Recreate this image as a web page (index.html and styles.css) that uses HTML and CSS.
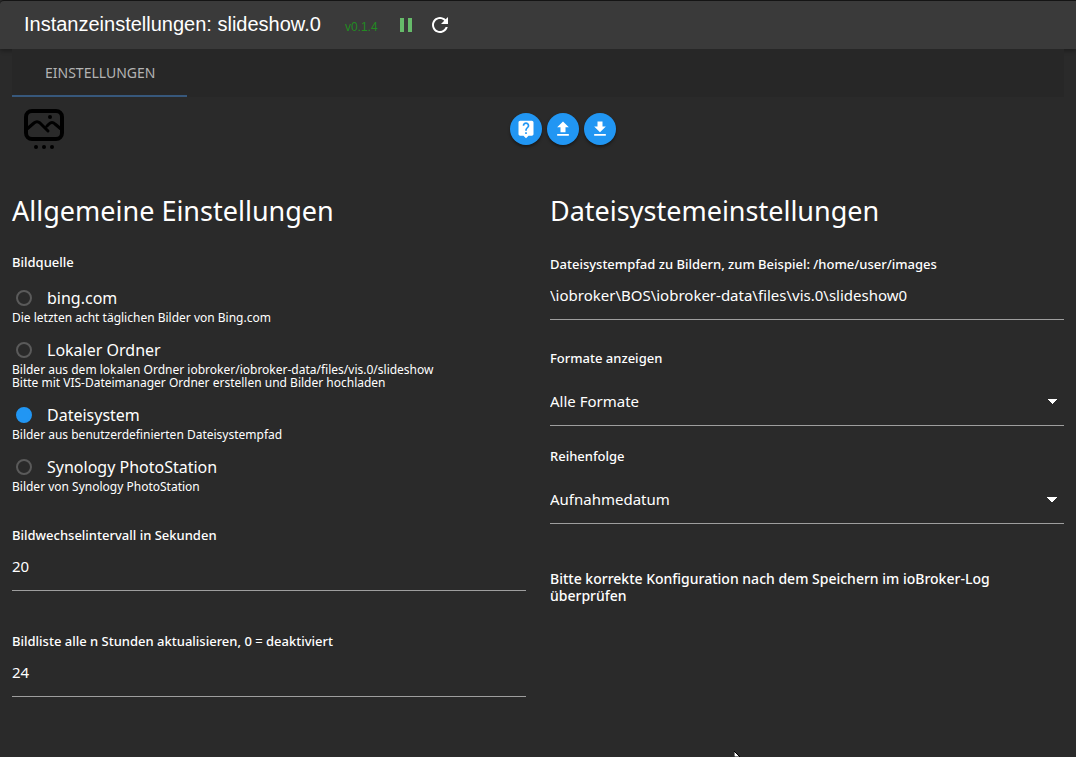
FILE: index.html
```html
<!DOCTYPE html>
<html lang="de">
<head>
<meta charset="utf-8">
<meta name="viewport" content="width=device-width, initial-scale=1">
<title>Instanzeinstellungen: slideshow.0</title>
<link rel="stylesheet" href="styles.css">
</head>
<body class="page">
<header class="titlebar">
  <h1 class="title">Instanzeinstellungen: slideshow.0</h1>
  <span class="version">v0.1.4</span>
  <div class="title-actions">
    <button class="icon-button pause" type="button" aria-label="Pause"><svg viewBox="0 0 24 24"><path d="M6 19h4V5H6v14zm8-14v14h4V5h-4z"/></svg></button>
    <button class="icon-button" type="button" aria-label="Neu starten"><svg viewBox="0 0 24 24"><path d="M17.65 6.35C16.2 4.9 14.21 4 12 4c-4.42 0-7.99 3.58-7.99 8s3.57 8 7.99 8c3.73 0 6.84-2.55 7.73-6h-2.08c-.82 2.33-3.04 4-5.65 4-3.31 0-6-2.69-6-6s2.69-6 6-6c1.66 0 3.14.69 4.22 1.78L13 11h7V4l-2.35 2.35z"/></svg></button>
  </div>
</header>
<nav class="tabs"><a class="tab" href="#settings">EINSTELLUNGEN</a></nav>
<div class="toolbar">
  <svg class="logo" viewBox="0 0 40 42" aria-hidden="true">
    <rect x="2" y="3" width="36" height="28" rx="6"/>
    <path class="logo-hills" d="M3 21l7-6q3-2.500 6 0l8 8M23 18l2-2q3-3 6 0l6 5"/>
    <g class="logo-dots"><circle cx="26" cy="9" r="2"/><circle cx="12" cy="39" r="2"/><circle cx="20" cy="39" r="2"/><circle cx="28" cy="39" r="2"/></g>
  </svg>
  <div class="actions">
    <button class="round-button" type="button" aria-label="Hilfe"><svg viewBox="0 0 24 24"><path d="M19 2H5c-1.110 0-2 .9-2 2v14c0 1.100.89 2 2 2h4l3 3 3-3h4c1.100 0 2-.9 2-2V4c0-1.100-.9-2-2-2zm-6 16h-2v-2h2v2zm2.070-7.750l-.9.920C13.450 11.900 13 12.500 13 14h-2v-.5c0-1.100.45-2.100 1.170-2.830l1.240-1.260c.37-.36.59-.86.59-1.410 0-1.100-.9-2-2-2s-2 .9-2 2H8c0-2.210 1.790-4 4-4s4 1.790 4 4c0 .88-.36 1.680-.93 2.250z"/></svg></button>
    <button class="round-button" type="button" aria-label="Hochladen"><svg viewBox="0 0 24 24"><path d="M9 16h6v-6h4l-7-7-7 7h4zm-4 2h14v2H5z"/></svg></button>
    <button class="round-button" type="button" aria-label="Herunterladen"><svg viewBox="0 0 24 24"><path d="M19 9h-4V3H9v6H5l7 7 7-7zM5 18v2h14v-2H5z"/></svg></button>
  </div>
</div>
<main class="columns" id="settings">
  <section class="column">
    <h2 class="heading">Allgemeine Einstellungen</h2>
    <fieldset class="sources">
      <legend class="label">Bildquelle</legend>
      <div class="source">
        <label class="choice"><input class="radio" type="radio" name="source">bing.com</label>
        <p class="hint">Die letzten acht täglichen Bilder von Bing.com</p>
      </div>
      <div class="source">
        <label class="choice"><input class="radio" type="radio" name="source">Lokaler Ordner</label>
        <p class="hint">Bilder aus dem lokalen Ordner iobroker/iobroker-data/files/vis.0/slideshow<br>Bitte mit VIS-Dateimanager Ordner erstellen und Bilder hochladen</p>
      </div>
      <div class="source">
        <label class="choice"><input class="radio" type="radio" name="source" checked>Dateisystem</label>
        <p class="hint">Bilder aus benutzerdefinierten Dateisystempfad</p>
      </div>
      <div class="source">
        <label class="choice"><input class="radio" type="radio" name="source">Synology PhotoStation</label>
        <p class="hint">Bilder von Synology PhotoStation</p>
      </div>
    </fieldset>
    <div class="numbers">
      <div class="field">
        <label class="label" for="interval">Bildwechselintervall in Sekunden</label>
        <input class="control" id="interval" type="text" value="20">
      </div>
      <div class="field">
        <label class="label" for="update">Bildliste alle n Stunden aktualisieren, 0 = deaktiviert</label>
        <input class="control" id="update" type="text" value="24">
      </div>
    </div>
  </section>
  <section class="column">
    <h2 class="heading">Dateisystemeinstellungen</h2>
    <div class="filesystem">
      <div class="field">
        <label class="label" for="path">Dateisystempfad zu Bildern, zum Beispiel: /home/user/images</label>
        <input class="control" id="path" type="text" value="\iobroker\BOS\iobroker-data\files\vis.0\slideshow0">
      </div>
      <div class="selects">
        <div class="field select-field">
          <label class="label" for="format">Formate anzeigen</label>
          <select class="control select" id="format"><option>Alle Formate</option></select>
        </div>
        <div class="field select-field">
          <label class="label" for="order">Reihenfolge</label>
          <select class="control select" id="order"><option>Aufnahmedatum</option></select>
        </div>
      </div>
      <p class="notice">Bitte korrekte Konfiguration nach dem Speichern im ioBroker-Log überprüfen</p>
    </div>
  </section>
</main>
<svg class="pointer" viewBox="0 0 6 6" aria-hidden="true"><path d="M0 0v6h6z"/></svg>
</body>
</html>
```
FILE: styles.css
```css
* {
  box-sizing: border-box;
}

.page {
  margin: 0;
  min-height: 100vh;
  position: relative;
  background: #2a2a2a;
  color: #fff;
  font: 13px/20px "Noto Sans", "Open Sans", sans-serif;
}

.titlebar {
  display: flex;
  align-items: center;
  padding: 0 24px;
  height: 49px;
  border-top: 1px solid #141414;
  border-top-left-radius: 4px;
  background: #3a3a3a;
  font-family: "Liberation Sans", Arial, sans-serif;
  box-shadow: 0 2px 4px rgba(0, 0, 0, 0.3);
}

.title {
  margin: 0 24px 2px 0;
  font-size: 20px;
  line-height: 24px;
  font-weight: 400;
}

.version {
  margin: 4px 16px 0 0;
  color: #228b22;
  font-size: 12px;
}

.title-actions {
  display: flex;
  gap: 10px;
}

.icon-button {
  width: 24px;
  height: 24px;
  padding: 0;
  border: 0;
  background: none;
  color: #fff;
}

.icon-button svg {
  display: block;
  width: 24px;
  height: 24px;
  fill: currentColor;
}

.pause {
  color: #66bb6a;
}

.tabs {
  position: relative;
  display: flex;
  margin: 0 12px;
  height: 48px;
  background: #272727;
}

.tab {
  padding: 0 32px 0 33px;
  border-bottom: 2px solid #37587c;
  color: #b4b4b4;
  font-size: 14px;
  line-height: 48px;
  text-decoration: none;
}

.toolbar {
  display: flex;
  align-items: center;
  padding: 11px 14px 10px 24px;
}

.logo {
  width: 40px;
  height: 42px;
  fill: none;
  stroke: #000;
  stroke-width: 4;
  stroke-linejoin: round;
  stroke-linecap: round;
}

.logo-hills {
  stroke-width: 3;
}

.logo-dots {
  fill: #000;
  stroke: none;
}

.actions {
  flex: 1;
  display: flex;
  justify-content: center;
  gap: 5px;
}

.round-button {
  display: grid;
  place-items: center;
  width: 32px;
  height: 32px;
  padding: 0;
  border: 0;
  border-radius: 50%;
  background: #2196f3;
  box-shadow: 0 2px 3px rgba(0, 0, 0, 0.4);
}

.round-button svg {
  width: 20px;
  height: 20px;
  fill: #fff;
}

.columns {
  display: grid;
  grid-template-columns: 1fr 1fr;
  gap: 24px;
  padding: 34px 12px 56px;
}

.heading {
  margin: 0 0 24px;
  font-size: 27px;
  line-height: 34px;
  font-weight: 400;
}

.sources {
  display: grid;
  gap: 13px;
  margin: 0;
  padding: 0;
  border: 0;
}

.label {
  display: block;
  padding: 0;
  font-size: 13px;
  line-height: 20px;
  font-weight: 500;
}

.sources .label {
  margin-bottom: 13px;
}

.choice {
  display: flex;
  align-items: center;
  gap: 15px;
  padding-left: 4px;
  font-size: 16px;
  line-height: 26px;
}

.radio {
  appearance: none;
  width: 16px;
  height: 16px;
  margin: 0;
  border: 2px solid #5a5a5a;
  border-radius: 50%;
}

.radio:checked {
  border-color: #2196f3;
  background: #2196f3;
}

.hint {
  margin: 0;
  font-size: 12px;
  line-height: 13px;
}

.numbers {
  display: grid;
  gap: 40px;
  margin-top: 32px;
}

.control {
  display: block;
  width: 100%;
  height: 46px;
  padding: 0 0 4px;
  border: 0;
  border-bottom: 1px solid #9e9e9e;
  border-radius: 0;
  background: none;
  color: #fff;
  font: 15px/20px "Noto Sans", "Open Sans", sans-serif;
  outline: 0;
}

.filesystem {
  padding-top: 2px;
}

.selects {
  display: grid;
  gap: 20px;
  margin-top: 28px;
}

.select-field {
  display: grid;
  gap: 10px;
}

.select {
  appearance: none;
  height: 48px;
  padding: 0 0 2px;
  background-image: linear-gradient(to bottom right, #fff 50%, transparent 50%), linear-gradient(to bottom left, #fff 50%, transparent 50%);
  background-repeat: no-repeat;
  background-size: 5px 5px;
  background-position: right 7px center, right 12px center;
}

.notice {
  margin: 46px 0 0;
  padding-right: 24px;
  font-size: 14px;
  line-height: 17px;
  font-weight: 500;
}

.pointer {
  position: absolute;
  left: 734px;
  bottom: 0;
  width: 6px;
  height: 6px;
  fill: #fff;
  stroke: #000;
}
```
